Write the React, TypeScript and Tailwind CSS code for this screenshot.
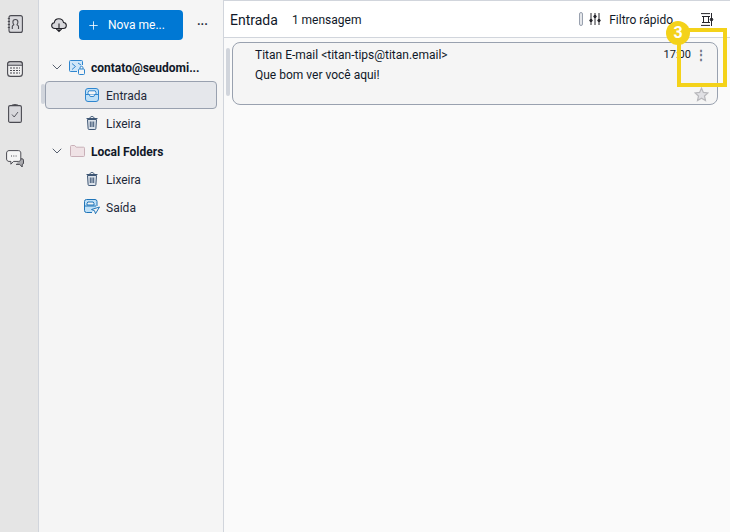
import { ChevronDown, Plus } from "lucide-react";

function AddressBookIcon() {
  return (
    <svg width="16" height="18" viewBox="0 0 16 18" fill="none" stroke="#4b4b52" strokeWidth="1.1">
      <rect x="2" y="0.6" width="13.4" height="16.8" rx="2" fill="#d8d8dc" />
      <path d="M0.8 3.500h2.200M0.8 6.500h2.200M0.800 9.500h2.200M0.800 12.500h2.200" />
      <path d="M5.300 14v-2.500c0-1 1-1.400 1.500-1.800-.6-.9-.9-1.800-.9-2.800 0-1.400 1-2.400 2.500-2.400s2.500 1 2.500 2.400c0 1-.3 1.900-.9 2.800.5.400 1.500.8 1.500 1.800V14" />
    </svg>
  );
}

function CalendarIcon() {
  return (
    <svg width="16" height="16" viewBox="0 0 16 16" fill="none" stroke="#4b4b52" strokeWidth="1.100">
      <rect x="0.600" y="0.600" width="14.800" height="14.800" rx="3" fill="#f0f0f0" />
      <path d="M0.600 3.300a2.700 2.700 0 0 1 2.700-2.700h9.400a2.700 2.700 0 0 1 2.700 2.700v.900H.600z" fill="#c9c9cd" />
      <path d="M3 7h10M3 9.500h10M3 12h10" strokeDasharray="2 1" />
    </svg>
  );
}

function TasksIcon() {
  return (
    <svg width="14" height="19" viewBox="0 0 14 19" fill="none" stroke="#4b4b52" strokeWidth="1.100">
      <rect x="0.600" y="1.600" width="12.800" height="16.800" rx="1.500" fill="#d8d8dc" />
      <path d="M4 1.800C4 .9 5 .6 7 .6s3 .3 3 1.200" />
      <path d="M4 10.500l2.200 2.500 3.800-5" strokeWidth="0.900" />
    </svg>
  );
}

function ChatIcon() {
  return (
    <svg width="18" height="18" viewBox="0 0 18 18" fill="none" stroke="#4b4b52" strokeWidth="1">
      <path d="M14 9v-.2h2.200c.7 0 1.300.6 1.300 1.300v3c0 .7-.5 1.300-1.300 1.300V17l-2.500-2.600H10" fill="#a9a9ad" />
      <path d="M3 .6h9.500c1.300 0 2.300 1 2.300 2.300v6.200c0 1.300-1 2.300-2.300 2.300H7.500l-2.600 2.800v-2.800H3C1.700 11.400.600 10.400.600 9.100V2.900C.600 1.600 1.700.600 3 .6z" fill="#f5f5f5" />
      <path d="M5 6h1M7.300 6h1M9.600 6h1" />
    </svg>
  );
}

function CloudIcon() {
  return (
    <svg width="16" height="16" viewBox="0 0 16 16" fill="none" stroke="#1f1f26" strokeWidth="1.100">
      <path d="M4 11.500c-1.800 0-3.300-1.200-3.300-2.900 0-1.500 1.100-2.600 2.500-2.800C3.600 3.400 5.500 1.800 7.800 1.800c2.300 0 4.200 1.500 4.700 3.700 1.600.1 2.800 1.400 2.800 3 0 1.700-1.400 3-3.100 3z" fill="#d8d8dc" />
      <path d="M8 6.500v8M5.300 11.800L8 14.500l2.700-2.700" />
    </svg>
  );
}

function AccountIcon() {
  return (
    <svg width="16" height="15" viewBox="0 0 16 15" fill="none" stroke="#2f86cf" strokeWidth="1">
      <path d="M8 11.500H1.500a1 1 0 0 1-1-1V1.500a1 1 0 0 1 1-1h11a1 1 0 0 1 1 1V5" fill="#cfe6f8" />
      <path d="M3 3.500L6.500 6.500 3 9.500M9 3l3 2" />
      <rect x="9.500" y="9" width="6" height="5.500" rx="1" fill="#f5f5f5" />
      <path d="M11 9V7.800a1.500 1.500 0 0 1 3 0V9" />
    </svg>
  );
}

function InboxIcon() {
  return (
    <svg width="14" height="14" viewBox="0 0 14 14" fill="none" stroke="#2f86cf" strokeWidth="1">
      <rect x="0.500" y="0.500" width="13" height="13" rx="2.500" fill="#bfe0f7" />
      <path d="M3 4.500l.8-1.700h6.400l.8 1.700v2H3z" fill="#f5f5f5" />
      <path d="M1 6.500h3.200l1 2h3.600l1-2H13" fill="#f5f5f5" />
    </svg>
  );
}

function TrashIcon() {
  return (
    <svg width="12" height="14" viewBox="0 0 12 14" fill="none" stroke="#3e5674" strokeWidth="1">
      <path d="M1.500 3.500h9l-.6 9a1 1 0 0 1-1 1H3.100a1 1 0 0 1-1-1z" fill="#dbe2ea" />
      <path d="M.5 2.500h11M4 2.200c0-1 .6-1.700 2-1.700s2 .7 2 1.700M4.300 5.500v5.500M6 5.500v5.500M7.700 5.500v5.500" />
    </svg>
  );
}

function FolderIcon() {
  return (
    <svg width="15" height="12" viewBox="0 0 15 12" fill="none" stroke="#c9b0b8" strokeWidth="1">
      <path d="M.5 1.500a1 1 0 0 1 1-1h3.200l1.500 1.700h7.300a1 1 0 0 1 1 1v7.300a1 1 0 0 1-1 1h-12a1 1 0 0 1-1-1z" fill="#efe2e5" />
    </svg>
  );
}

function OutboxIcon() {
  return (
    <svg width="16" height="16" viewBox="0 0 16 16" fill="none" stroke="#1f74b8" strokeWidth="1">
      <path d="M8 13.500H2.500a2 2 0 0 1-2-2v-9a2 2 0 0 1 2-2h8.500a2 2 0 0 1 2 2V7" fill="#bfe0f7" />
      <path d="M3 4.500l.8-1.500h5.400l.8 1.500v1.500H3zM1 7h11" fill="#f5f5f5" />
      <path d="M15.500 8l-8 2.500 3 1.200 1 3z" fill="#f5f5f5" />
    </svg>
  );
}

function FilterIcon() {
  return (
    <svg width="12" height="12" viewBox="0 0 12 12" fill="none" stroke="#26262c" strokeWidth="1">
      <path d="M2 0v12M6 0v12M10 0v12" />
      <circle cx="2" cy="7.500" r="1.200" fill="#26262c" />
      <circle cx="6" cy="3.500" r="1.200" fill="#26262c" />
      <circle cx="10" cy="7.500" r="1.200" fill="#26262c" />
    </svg>
  );
}

function LayoutIcon() {
  return (
    <svg width="13" height="13" viewBox="0 0 13 13" fill="none" stroke="#26262c" strokeWidth="1">
      <path d="M0 .6h9M0 12.400h9M1 3.500h8M1 9.500h8M2.500 3.500v6M7.500 3.500v6M10.500 0v13" />
      <circle cx="10.500" cy="6.500" r="1.300" fill="#26262c" />
    </svg>
  );
}

function Folder({ icon, label, selected }: { icon: React.ReactNode; label: string; selected?: boolean }) {
  return (
    <div
      className={
        "flex h-7 items-center gap-1.5 rounded border pl-9.5 text-xs text-gray-800 " +
        (selected ? "border-gray-400 bg-gray-200" : "border-transparent")
      }
    >
      <span className="flex w-4 justify-center">{icon}</span>
      <span className="pt-0.5">{label}</span>
    </div>
  );
}

function Account({ icon, label }: { icon: React.ReactNode; label: string }) {
  return (
    <div className="flex h-7 items-center text-xs font-bold text-gray-900">
      <ChevronDown className="ml-1 mr-1 text-gray-700" size={16} strokeWidth={1.25} />
      <span className="mr-1.5 flex w-4 justify-center">{icon}</span>
      <span className="pt-0.5">{label}</span>
    </div>
  );
}

export default function App() {
  return (
    <div
      className="relative flex h-[532px] w-[730px] overflow-hidden bg-neutral-50"
      style={{ fontFamily: 'Roboto, "Noto Sans", sans-serif' }}
    >
      <div className="flex w-[39px] flex-col items-center border-r border-gray-300 bg-neutral-200 pr-2 pt-px">
        <span className="flex h-[45px] items-center"><AddressBookIcon /></span>
        <span className="flex h-[45px] items-center"><CalendarIcon /></span>
        <span className="flex h-[45px] items-center"><TasksIcon /></span>
        <span className="flex h-[45px] items-center"><ChatIcon /></span>
      </div>

      <div className="flex w-[185px] flex-col border-r border-gray-300 bg-neutral-100">
        <div className="flex items-center pl-3 pt-2.5">
          <CloudIcon />
          <button className="ml-3 flex h-[30px] w-[104px] items-center gap-2 rounded-sm bg-[#0078d4] pl-2 text-xs text-white">
            <Plus size={13} strokeWidth={1.5} />
            Nova me...
          </button>
          <span className="ml-3.5 text-xs font-bold leading-none text-gray-800">···</span>
        </div>
        <div className="relative mt-3 flex flex-col pl-1.5 pr-1.5 pt-px">
          <Account icon={<AccountIcon />} label="contato@seudomi..." />
          <Folder icon={<InboxIcon />} label="Entrada" selected />
          <Folder icon={<TrashIcon />} label="Lixeira" />
          <Account icon={<FolderIcon />} label="Local Folders" />
          <Folder icon={<TrashIcon />} label="Lixeira" />
          <Folder icon={<OutboxIcon />} label="Saída" />
          <div className="absolute left-0.5 top-8 h-5 w-1 rounded-full bg-gray-300" />
        </div>
      </div>

      <div className="relative flex flex-1 flex-col">
        <div className="flex h-[38px] items-center border-y border-gray-300 bg-white pl-1.5 text-xs text-gray-900">
          <span className="pt-0.5 text-sm">Entrada</span>
          <span className="ml-3.5 pt-0.5">1 mensagem</span>
          <div className="ml-auto flex items-center">
            <div className="mr-1.5 h-3.5 w-1 rounded-full border border-gray-400 bg-gray-200" />
            <FilterIcon />
            <span className="ml-2 pt-0.5">Filtro rápido</span>
            <span className="ml-7 mr-4"><LayoutIcon /></span>
          </div>
        </div>
        <div className="relative ml-2 mr-3 mt-1 flex h-[63px] flex-col rounded-lg border border-gray-400 bg-neutral-100 pl-[22px] pr-2.5 pt-1 text-gray-900">
          <div className="flex items-center text-xs">
            <span>Titan E-mail &lt;titan-tips@titan.email&gt;</span>
            <span className="ml-auto text-[11px]">17:00</span>
            <span className="ml-1 text-xs font-bold leading-none text-gray-500">⋮</span>
          </div>
          <div className="mt-1 text-xs">Que bom ver você aqui!</div>
          <svg className="absolute bottom-0.5 right-2" width="15" height="15" viewBox="0 0 24 24" fill="#e0e0e4" stroke="#b8b8bc" strokeWidth="2">
            <path d="M12 2l3 6.700 7.200.8-5.400 4.900 1.500 7.100L12 17.900 5.700 21.500l1.500-7.100L1.800 9.500 9 8.700z" />
          </svg>
        </div>
        <div className="absolute left-0.5 top-12 h-12 w-1 rounded-full bg-gray-300" />
      </div>

      <div className="absolute left-[677px] top-7 h-[59px] w-[50px] border-4 border-[#f4d21a]" />
      <div className="absolute left-[666px] top-[21px] flex h-6 w-6 items-center justify-center rounded-full bg-[#f4d21a] text-base font-bold text-white">
        3
      </div>
    </div>
  );
}
